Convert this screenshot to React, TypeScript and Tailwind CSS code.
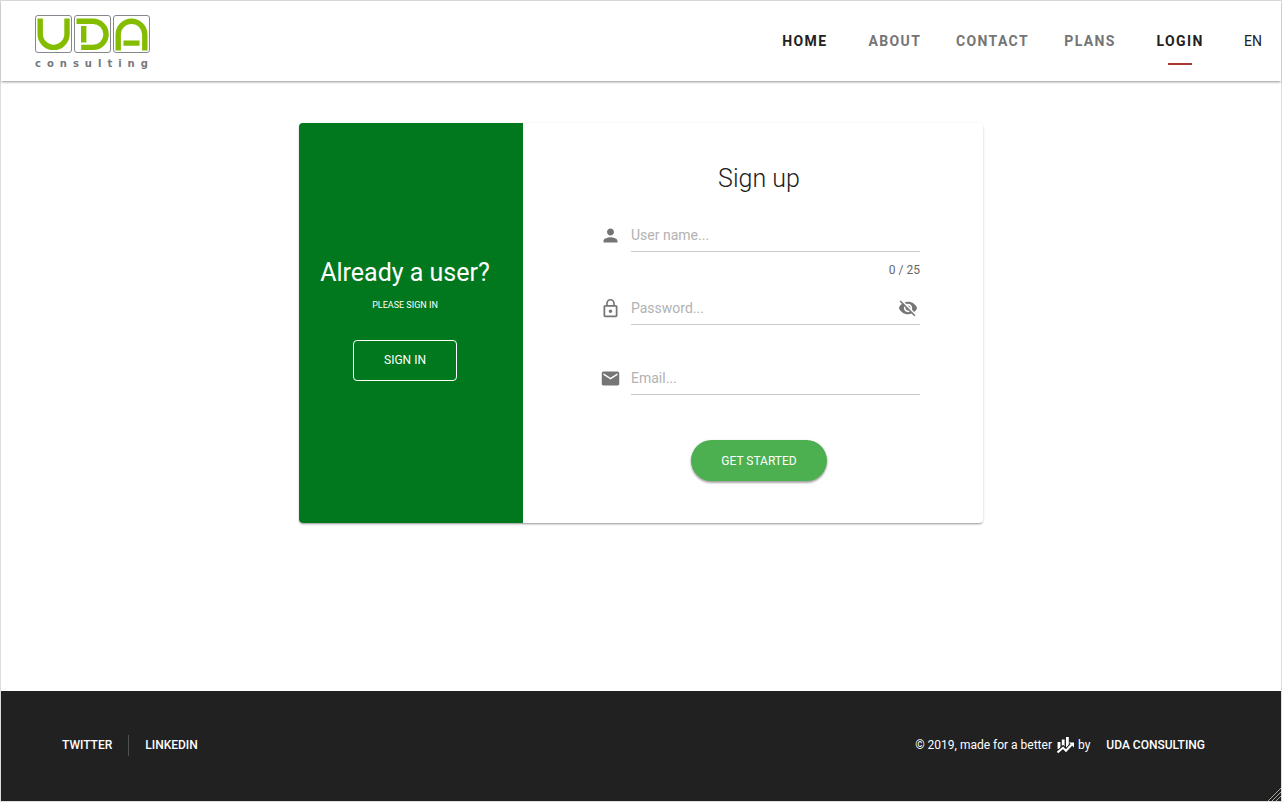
import { useState } from "react";
import type { ReactNode } from "react";
import { MdEmail, MdLockOutline, MdPerson, MdVisibility, MdVisibilityOff } from "react-icons/md";

const navItems = [
  { label: "HOME", active: true },
  { label: "ABOUT", active: false },
  { label: "CONTACT", active: false },
  { label: "PLANS", active: false },
  { label: "LOGIN", active: true, current: true },
];

function Logo() {
  return (
    <a href="#home" aria-label="UDA consulting" className="pt-0.5">
      <svg width="126" height="58" viewBox="0 0 126 58" fill="none">
        <g stroke="#85888f" strokeWidth="1">
          <rect x="0.5" y="2.5" width="36" height="37" rx="2.5" />
          <rect x="39.5" y="2.5" width="36" height="37" rx="2.5" />
          <rect x="78.5" y="2.5" width="36" height="37" rx="2.5" />
        </g>
        <g stroke="#84bd00" strokeWidth="5.4">
          <path d="M5.2 5.5v15.5a13.4 13.4 0 0 0 26.8 0V5.5" />
          <path d="M41.5 8.2H58a13 13 0 0 1 0 26.2H46.2M48.7 13V29.5" />
          <path d="M83.2 37.5V21.5a13.2 13.2 0 0 1 26.6 0v16M88.5 30.1h16" />
        </g>
        <text x="0" y="54" className="fill-[#77797d] font-['DejaVu_Sans'] text-[10px] font-bold tracking-[6px]">
          consulting
        </text>
      </svg>
    </a>
  );
}

function Header() {
  return (
    <header className="flex h-20 items-center justify-between bg-white pr-[19px] pl-[34px] shadow-[0_2px_2px_-1px_rgba(0,0,0,0.3),0_1px_3px_0_rgba(0,0,0,0.16)]">
      <Logo />
      <nav className="flex items-center text-sm leading-5">
        {navItems.map((item) => (
          <a
            key={item.label}
            href={`#${item.label.toLowerCase()}`}
            className={`relative min-w-[90px] px-4 py-3 text-center font-bold tracking-widest ${
              item.active ? "text-[#212121]" : "text-[#757575]"
            }`}
          >
            {item.label}
            {item.current && <span className="absolute -bottom-0.5 left-1/2 h-0.5 w-6 -translate-x-1/2 bg-[#a93a32]" />}
          </a>
        ))}
        <button type="button" className="ml-[19px] text-[#212121]">
          EN
        </button>
      </nav>
    </header>
  );
}

type FieldProps = {
  id: string;
  label: string;
  type: string;
  icon: ReactNode;
  value: string;
  onChange: (value: string) => void;
  maxLength?: number;
  action?: ReactNode;
};

function Field({ id, label, type, icon, value, onChange, maxLength, action }: FieldProps) {
  return (
    <div className="flex gap-[9px]">
      <label htmlFor={id} aria-label={label} className="flex h-[33px] w-6 shrink-0 items-center justify-center text-[#757575]">
        {icon}
      </label>
      <div className="min-w-0 grow">
        <div className="flex h-[33px] items-center border-b border-[#c9c9c9]">
          <input
            id={id}
            type={type}
            value={value}
            maxLength={maxLength}
            onChange={(event) => onChange(event.target.value)}
            placeholder={`${label}...`}
            className="min-w-0 grow bg-transparent text-sm text-[#212121] outline-none placeholder:text-[#b2b2b2]"
          />
          {action}
        </div>
        {maxLength && (
          <p className="pt-[10px] text-right text-xs leading-4 text-[#666666]">
            {value.length} / {maxLength}
          </p>
        )}
      </div>
    </div>
  );
}

function SignUpForm() {
  const [userName, setUserName] = useState("");
  const [password, setPassword] = useState("");
  const [email, setEmail] = useState("");
  const [visible, setVisible] = useState(false);

  return (
    <form onSubmit={(event) => event.preventDefault()} className="min-w-0 grow pt-10 pr-[63px] pb-[42px] pl-[75px]">
      <h1 className="text-center text-[25px] leading-8 font-light text-[#212121]">Sign up</h1>
      <div className="pt-6">
        <Field id="username" label="User name" type="text" icon={<MdPerson size={21} />} value={userName} onChange={setUserName} maxLength={25} />
      </div>
      <div className="pt-[14px]">
        <Field
          id="password"
          label="Password"
          type={visible ? "text" : "password"}
          icon={<MdLockOutline size={21} />}
          value={password}
          onChange={setPassword}
          action={
            <button type="button" aria-label="Toggle password visibility" onClick={() => setVisible(!visible)} className="mr-0.5 text-[#757575]">
              {visible ? <MdVisibility size={20} /> : <MdVisibilityOff size={20} />}
            </button>
          }
        />
      </div>
      <div className="pt-[37px]">
        <Field id="email" label="Email" type="email" icon={<MdEmail size={21} />} value={email} onChange={setEmail} />
      </div>
      <div className="flex justify-center pt-[45px]">
        <button
          type="submit"
          className="h-[41px] rounded-full bg-[#4caf50] px-[30px] text-xs text-white shadow-[0_2px_2px_0_rgba(0,0,0,0.25),0_1px_3px_0_rgba(0,0,0,0.2)]"
        >
          GET STARTED
        </button>
      </div>
    </form>
  );
}

function ChartIcon() {
  return (
    <svg width="17" height="17" viewBox="0 0 17 17" fill="none" stroke="white" className="mr-1 ml-[5px]">
      <path strokeWidth="2.8" d="M2 5v7M6.2 2.5V12M10.4 0v12" />
      <path stroke="#212121" strokeWidth="4" d="M0.5 15.5 6 10.5l3 3 5.5-6" />
      <path strokeWidth="2" d="M0.5 15.5 6 10.8l3 3 5.5-6" />
      <path fill="white" stroke="none" d="M12 5.5h5v5z" />
    </svg>
  );
}

function Footer() {
  return (
    <footer className="relative flex h-[110px] items-center justify-between bg-[#212121] pr-[60px] pb-0.5 pl-[45px] text-xs leading-[21px] text-white">
      <ul className="flex font-medium">
        <li>
          <a href="#twitter" className="block border-r border-[#544f4f] px-4">
            TWITTER
          </a>
        </li>
        <li>
          <a href="#linkedin" className="block px-4">
            LINKEDIN
          </a>
        </li>
      </ul>
      <p className="flex items-center">
        © 2019, made for a better
        <ChartIcon />
        by
        <a href="#company" className="px-4 font-medium">
          UDA CONSULTING
        </a>
      </p>
      <svg width="14" height="14" viewBox="0 0 14 14" stroke="#a8a49c" className="absolute right-0 bottom-0">
        <path d="M1 14 14 1M5 14 14 5M9 14 14 9" />
      </svg>
    </footer>
  );
}

export default function App() {
  return (
    <div className="flex min-h-screen flex-col border border-[#dddddd] bg-white font-['Roboto',sans-serif]">
      <Header />
      <main className="grow pt-[42px] pb-10">
        <section className="mx-auto flex w-full max-w-[684px] overflow-hidden rounded bg-white shadow-[0_1px_3px_0_rgba(0,0,0,0.16),0_2px_2px_-1px_rgba(0,0,0,0.3)]">
          <div className="flex w-56 shrink-0 flex-col items-center bg-[#02781e] pt-[134px] pr-3 text-white">
            <h2 className="text-[25px] leading-8">Already a user?</h2>
            <p className="pt-2 text-[9px] leading-4">PLEASE SIGN IN</p>
            <button type="button" className="mt-[27px] h-[41px] rounded border border-white px-[30px] pb-px text-xs">
              SIGN IN
            </button>
          </div>
          <SignUpForm />
        </section>
      </main>
      <Footer />
    </div>
  );
}
